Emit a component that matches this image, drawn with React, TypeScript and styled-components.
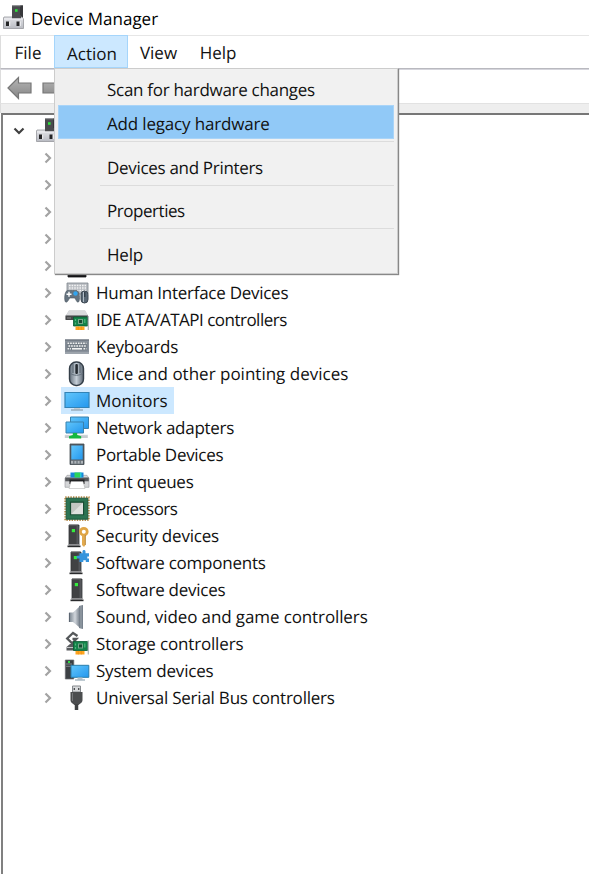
import React from "react";
import styled, { createGlobalStyle } from "styled-components";

const GlobalStyle = createGlobalStyle`
  * { box-sizing: border-box; }
  body { margin: 0; background: #fff; overflow: hidden; }
`;

const Window = styled.div`
  width: 589px;
  height: 874px;
  display: flex;
  flex-direction: column;
  background: #fff;
  color: #111;
  font: 17px/27px "Open Sans", "Noto Sans", sans-serif;
  text-rendering: geometricPrecision;
  white-space: nowrap;
`;

const TitleBar = styled.header`
  height: 35px;
  display: flex;
  align-items: center;
  padding: 1px 0 0 2px;
  gap: 3px;
  color: #000;
`;

const Text = styled.span<{ $track?: number }>`
  letter-spacing: ${(p) => p.$track ?? 0}px;
`;

const MenuBar = styled.nav`
  height: 34px;
  display: flex;
  border-top: 1px solid #e6e6e6;
  border-left: 1px solid #ddd;
  border-bottom: 1px solid #b9b9bf;
`;

const MenuButton = styled.div<{ $open?: boolean; $width: number }>`
  position: relative;
  width: ${(p) => p.$width}px;
  height: 33px;
  margin-top: -1px;
  display: flex;
  justify-content: center;
  align-items: center;
  padding: ${(p) => (p.$open ? "3px 0 0 2px" : "1px 0 0 1px")};
  border: 1px solid ${(p) => (p.$open ? "#a5d5fb" : "transparent")};
  background: ${(p) => (p.$open ? "#cce8ff" : "transparent")};
`;

const Dropdown = styled.div`
  position: absolute;
  z-index: 2;
  left: -1px;
  top: 32px;
  width: 344px;
  height: 206px;
  padding: 3px 3px 0;
  background: linear-gradient(90deg, #efefef 0 45px, #f1f1f1 45px);
  border: 1px solid #ccc;
  box-shadow: 1px 1px 1px #888;
`;

const DropdownItem = styled.div<{ $active?: boolean; $first?: boolean }>`
  height: ${(p) => (p.$first ? 33 : 34)}px;
  display: flex;
  align-items: center;
  padding: 2px 0 0 48px;
  border: 1px solid ${(p) => (p.$active ? "#a9d4f8" : "transparent")};
  background: ${(p) => (p.$active ? "#91c9f7" : "transparent")};
`;

const Separator = styled.div<{ $tight?: boolean }>`
  height: ${(p) => (p.$tight ? 9 : 10)}px;
  padding: 2px 0 0 42px;
  &::before {
    content: "";
    display: block;
    height: 1px;
    background: #dcdcdc;
  }
`;

const Toolbar = styled.div`
  height: 34px;
  display: flex;
  align-items: center;
  gap: 7px;
  padding: 3px 0 0 6px;
  border-top: 1px solid #d5d5dc;
  border-left: 1px solid #ddd;
`;

const Band = styled.div`
  height: 10px;
  background: #eee;
  border-top: 1px solid #e2e2e2;
  border-left: 1px solid #ddd;
`;

const Tree = styled.main`
  flex: 1;
  margin-left: 1px;
  border-top: 2px solid #777;
  border-left: 2px solid #808080;
  padding-top: 2px;
`;

const Row = styled.div`
  height: 27px;
  display: flex;
  align-items: center;
  padding-left: 38px;
`;

const RootRow = styled(Row)`
  padding-left: 9px;
`;

const Chevron = styled.svg`
  width: 14px;
  height: 14px;
  flex: none;
  fill: none;
  stroke-width: 2.2;
`;

const Entry = styled.div<{ $selected?: boolean }>`
  height: 27px;
  margin-left: 6px;
  padding: 0 6px 0 3px;
  display: flex;
  align-items: center;
  gap: 6px;
  background: ${(p) => (p.$selected ? "#cce8ff" : "transparent")};
`;

const Glyph = styled.svg`
  width: 26px;
  height: 26px;
  flex: none;
  display: block;
`;

const Gradients = () => (
  <defs>
    <linearGradient id="screen" x1="0" y1="0" x2="1" y2="1">
      <stop offset="0" stopColor="#62c6fb" /><stop offset="1" stopColor="#2397ee" />
    </linearGradient>
    <linearGradient id="metal" x1="0" y1="0" x2="0" y2="1">
      <stop offset="0" stopColor="#e3e4e8" /><stop offset="1" stopColor="#b9bbc2" />
    </linearGradient>
    <linearGradient id="steel" x1="0" y1="0" x2="1" y2="0">
      <stop offset="0" stopColor="#65717d" /><stop offset=".5" stopColor="#c5ced7" /><stop offset="1" stopColor="#5c6773" />
    </linearGradient>
    <linearGradient id="arrow" x1="0" y1="0" x2="0" y2="1">
      <stop offset="0" stopColor="#b6b6b6" /><stop offset="1" stopColor="#858585" />
    </linearGradient>
    <linearGradient id="cone" x1="0" y1="0" x2="1" y2="0">
      <stop offset="0" stopColor="#75818c" /><stop offset=".6" stopColor="#d1d6dc" /><stop offset="1" stopColor="#858e98" />
    </linearGradient>
  </defs>
);

const ComputerIcon = () => (
  <Glyph viewBox="0 0 26 26">
    <Gradients />
    <path d="M10 .5h11v15H10z" fill="#4a4b4e" />
    <path d="M18 .5h3v15h-3z" fill="#37383b" />
    <path d="M10 .8h9" stroke="#85868a" strokeWidth=".8" />
    <rect x="13" y="4.200" width="2.600" height="2.600" fill="#2fe03c" />
    <path d="M2 12h18l1.500 2v9.500H1.500V13z" fill="url(#metal)" stroke="#95979c" strokeWidth=".8" />
    <path d="M10 10h9v3.500h-9z" fill="#4a4b4e" />
    <path d="M2 14h19" stroke="#f0f0f3" />
    <path d="M4 16.500h3.200v4.500H4zM14.500 16.500h3.200v4.500h-3.200z" fill="#242426" />
    <path d="M7.200 16.500h1v4.500h-1zM17.700 16.500h1v4.500h-1z" fill="#f7f7f8" />
  </Glyph>
);

const Card = ({ y = 0 }: { y?: number }) => (
  <g transform={`translate(0 ${y})`}>
    <path d="M9.5 10h14v9h-14z" fill="#15824a" stroke="#075b31" strokeWidth=".8" />
    <path d="M14 12h5v5h-5z" fill="#76a88b" />
    <path d="M15 13h3v3h-3z" fill="#174c31" />
    <path d="M11.500 12v2M11.500 15.500v2M20.800 12v4" stroke="#4cb77b" strokeWidth="1.200" />
    <path d="M11.5 19.5h9V23h-9z" fill="#ffa51f" />
    <path d="M14.3 19.5V23M17.3 19.5V23" stroke="#e88c10" strokeWidth=".6" />
    <path d="M24.3 9v14" stroke="#aeb4b9" strokeWidth="1.2" />
  </g>
);

const Tower = ({ x = 0, y = 0 }: { x?: number; y?: number }) => (
  <g transform={`translate(${x} ${y})`}>
    <path d="M5 2h10v20H5z" fill="#414244" stroke="#343537" strokeWidth=".8" />
    <path d="M5 1.800h9" stroke="#8b8c8e" />
    <path d="M12.5 3h2v18h-2z" fill="#55565a" />
    <rect x="7.800" y="6" width="3.200" height="3.200" fill="#35ec3d" />
    <path d="M3.5 22.5h13v1.7h-13z" fill="#292a2c" />
    <path d="M4.5 21.7h11" stroke="#a2a2a4" />
  </g>
);

const icons: Record<string, React.ReactNode> = {
  hidden: <path d="M4 8h18v16H4z" fill="#151517" stroke="#151517" strokeWidth=".8" />,
  hid: (
    <>
      <path d="M3 3h21v11H3z" fill="#b7bbc0" stroke="#7e858d" strokeWidth=".8" />
      <path d="M5 5.5h17M5 8h17M5 10.5h17" stroke="#f4f4f4" strokeWidth="1.4" strokeDasharray="1.6 1" />
      <path d="M1.500 22c-1.500-2-1-11 2-11.500h9c3 0 4 9.500 2 11.500-2 1-3-4-4-4H6c-1 0-2 5-4.500 4z" fill="#65737f" stroke="#4a5660" strokeWidth=".6" />
      <path d="M5 11.800v5M2.500 14.300h5" stroke="#fff" strokeWidth="1.4" />
      <circle cx="11.5" cy="13.5" r="2.2" fill="#31a4ef" />
      <rect x="17" y="11" width="7" height="12" rx="3.5" fill="#596774" stroke="#3d4852" />
      <path d="M19.5 12v10" stroke="#b2bec8" /><path d="M20.8 12v5" stroke="#27313a" />
    </>
  ),
  ide: (
    <>
      <path d="M5 3.5h16l3 5v3.5H1.5V9z" fill="#bfc1c4" />
      <path d="M5 3.5h16l3 5H2z" fill="#dadbdd" />
      <path d="M1.5 8.5H24V13H1.5z" fill="#47484a" />
      <path d="M3 11h4" stroke="#8c8c8c" />
      <Card />
    </>
  ),
  keyboard: (
    <>
      <path d="M1 5.500h24v14.500H1z" fill="#88909a" />
      <path d="M1 6h24" stroke="#626b75" />
      <path d="M2.5 8h21v8.5h-21z" fill="#767f88" />
      <path d="M3.5 9.3h19M4.5 12h17.5M3.5 14.8h3.5M19.5 14.8h3" stroke="#f2f2f2" strokeWidth="1.6" strokeDasharray="1.7 .9" />
      <path d="M8 14.8h10" stroke="#f2f2f2" strokeWidth="1.6" />
      <path d="M1 19h24" stroke="#b3b9bf" />
    </>
  ),
  mouse: (
    <>
      <rect x="5.5" y="1" width="14" height="23.5" rx="6.5" fill="url(#steel)" stroke="#343e48" strokeWidth="1.4" />
      <path d="M9 3v9M16 3v9" stroke="#45515c" strokeWidth=".8" />
      <path d="M6 12c3 3 10 3 13 0" stroke="#65717d" fill="none" />
      <rect x="11.3" y="3" width="2.6" height="10" rx="1" fill="#252b31" />
    </>
  ),
  monitor: (
    <>
      <path d="M1 4.500h24v15H1z" fill="url(#screen)" stroke="#3283b6" strokeWidth="1.200" />
      <path d="M10 20h6v1.500h-6z" fill="#c5ccd1" /><path d="M7 22h12" stroke="#80909b" strokeWidth="1" />
    </>
  ),
  network: (
    <>
      <path d="M6.500 2h18v11.500h-18z" fill="url(#screen)" stroke="#3981ad" />
      <path d="M2 7h17.500v11H2z" fill="url(#screen)" stroke="#3981ad" />
      <path d="M.8 20h23v3H.8z" fill="#c7cccf" />
      <path d="M1 19.8h23" stroke="#edf0f1" strokeWidth=".7" />
      <path d="M8.8 18h4.4v2l4 1.300v2.100H5v-2.100l3.800-1.300z" fill="#16b841" />
    </>
  ),
  portable: (
    <>
      <path d="M6 2h14v20.5H6z" fill="#545c64" stroke="#434b52" strokeWidth=".8" />
      <path d="M7.3 3.5h11.4v14H7.3z" fill="url(#screen)" />
      <path d="M7 18.7h12v3H7z" fill="#aeb4b9" /><path d="M9.8 18.7v3M13 18.7v3M16.2 18.7v3" stroke="#59636b" />
    </>
  ),
  printer: (
    <>
      <path d="M3 6.300h20l2 3v9H1v-9z" fill="#d4d5d7" stroke="#94969a" strokeWidth=".6" />
      <path d="M1.200 8.500h23.600v3.800H1.200z" fill="#55575a" />
      <path d="M6.500 3.500h13v5h-13z" fill="#1686db" /><path d="M10.500 3.500h5.500v5h-5.500z" fill="#2ad45a" />
      <path d="M16 3.500h1.500v5H16z" fill="#27c9d0" />
      <path d="M5.500 10.500h15v4.500h-15z" fill="#202123" />
      <path d="M7 12.500h12l2 7H5z" fill="#fff" stroke="#aaa" strokeWidth=".5" />
    </>
  ),
  cpu: (
    <>
      <path d="M1.2 1.2h23.6v23H1.2z" fill="none" stroke="#b78c4b" strokeWidth="1.8" strokeDasharray="1.4 1.2" />
      <path d="M2.2 2.2h21.6v21H2.2z" fill="#2c7352" stroke="#1b563b" />
      <path d="M6.5 6.2h13v12.500h-13z" fill="#c3c7c3" stroke="#184c33" strokeWidth="1.2" />
      <path d="M7 18.200L19 6.700v11.500z" fill="#dfe1df" />
    </>
  ),
  security: (
    <>
      <Tower />
      <circle cx="19.8" cy="8.7" r="3.4" fill="#fff" stroke="#e0a544" strokeWidth="2.8" />
      <path d="M18 12h3.700v9.500L20 24l-2-2z" fill="#e3ab50" />
      <path d="M21.300 12v10" stroke="#a87833" strokeWidth=".7" />
    </>
  ),
  component: (
    <>
      <Tower x={2} />
      <path d="M15.500 3.200h3V1.500c0-2 3-2 3 0v1.700H25v3.300h-1.700v2H25V12h-3.200v-1.700h-2.500V12h-3.800V8.500h-1.700c-1.800 0-1.800-2.700 0-2.700h1.700z" fill="#3594dc" />
    </>
  ),
  software: <Tower x={3} />,
  sound: (
    <>
      <path d="M5 8.5h4L15 3v20l-6-5H5z" fill="url(#cone)" />
      <path d="M15 2l4-1v24l-4-1z" fill="#77818c" /><path d="M17 2v22" stroke="#9da5ad" />
      <path d="M5.4 9v9" stroke="#59636e" />
    </>
  ),
  storage: (
    <>
      <path d="M6 13h6v6.500H2.500V16z" fill="#585b5e" />
      <path d="M2.500 16.500h7" stroke="#c5c6c8" />
      <path d="M13.500 5L9 2 3.200 7.500l5 4.800 4.200-4.500H8.500" fill="none" stroke="#55585a" strokeWidth="2.300" />
      <Card y={.5} />
    </>
  ),
  system: (
    <>
      <path d="M1.3 2h8.5v19H1.3z" fill="#3c4044" stroke="#6b6f72" strokeWidth=".7" />
      <path d="M2 6h6M2 8.3h6" stroke="#80868a" /><rect x="4" y="3" width="2" height="2" fill="#2fdd42" />
      <path d="M7 7.3h17.8v12H7z" fill="url(#screen)" stroke="#297dab" />
      <path d="M13.5 19.5h5v2h-5z" fill="#b9c6ce" /><path d="M11 22h10" stroke="#8097a5" />
    </>
  ),
  usb: (
    <>
      <path d="M8.5 1h8v6h-8z" fill="#d6d8da" stroke="#85898d" /><path d="M10.3 3v2M14.7 3v2" stroke="#474a4c" strokeWidth="1.3" />
      <path d="M6.500 7h12v8c0 3-2.500 3.500-4 5h-4c-1.500-1.500-4-2-4-5z" fill="#4b4d4f" />
      <path d="M8.5 8v8" stroke="#77797b" /><path d="M12.500 19v6" stroke="#3f4143" strokeWidth="3.5" />
    </>
  ),
};

interface Device { icon: string; name?: string; track?: number; selected?: boolean }

const devices: Device[] = [
  { icon: "hidden" }, { icon: "hidden" }, { icon: "hidden" }, { icon: "hidden" }, { icon: "hidden" },
  { icon: "hid", name: "Human Interface Devices", track: -0.27 },
  { icon: "ide", name: "IDE ATA/ATAPI controllers", track: -0.51 },
  { icon: "keyboard", name: "Keyboards", track: -0.2 },
  { icon: "mouse", name: "Mice and other pointing devices" },
  { icon: "monitor", name: "Monitors", selected: true },
  { icon: "network", name: "Network adapters", track: -0.27 },
  { icon: "portable", name: "Portable Devices", track: -0.3 },
  { icon: "printer", name: "Print queues", track: -0.28 },
  { icon: "cpu", name: "Processors", track: -0.52 },
  { icon: "security", name: "Security devices", track: -0.2 },
  { icon: "component", name: "Software components", track: -0.24 },
  { icon: "software", name: "Software devices", track: -0.25 },
  { icon: "sound", name: "Sound, video and game controllers", track: -0.11 },
  { icon: "storage", name: "Storage controllers", track: -0.16 },
  { icon: "system", name: "System devices", track: -0.2 },
  { icon: "usb", name: "Universal Serial Bus controllers", track: -0.22 },
];

export default function App() {
  return (
    <Window>
      <GlobalStyle />
      <TitleBar>
        <ComputerIcon />
        <Text>Device Manager</Text>
      </TitleBar>
      <MenuBar>
        <MenuButton $width={53}><Text>File</Text></MenuButton>
        <MenuButton $width={74} $open>
          <Text>Action</Text>
          <Dropdown>
            <DropdownItem $first><Text $track={-0.29}>Scan for hardware changes</Text></DropdownItem>
            <DropdownItem $active><Text $track={-0.17}>Add legacy hardware</Text></DropdownItem>
            <Separator />
            <DropdownItem><Text $track={-0.31}>Devices and Printers</Text></DropdownItem>
            <Separator $tight />
            <DropdownItem><Text $track={-0.46}>Properties</Text></DropdownItem>
            <Separator />
            <DropdownItem><Text $track={-0.2}>Help</Text></DropdownItem>
          </Dropdown>
        </MenuButton>
        <MenuButton $width={60}><Text>View</Text></MenuButton>
        <MenuButton $width={59}><Text $track={-0.1}>Help</Text></MenuButton>
      </MenuBar>
      <Toolbar>
        <Glyph viewBox="0 0 26 26">
          <path d="M1 13L11.500 2.500V8H24v10H11.500v5.500z" fill="url(#arrow)" stroke="#777" strokeWidth="1.2" />
        </Glyph>
        <Glyph viewBox="0 0 26 26">
          <path d="M3 8h12V2.500L25 13 15 23.500V18H3z" fill="url(#arrow)" stroke="#777" strokeWidth="1.2" />
        </Glyph>
      </Toolbar>
      <Band />
      <Tree>
        <RootRow>
          <Chevron viewBox="0 0 14 14" stroke="#404040"><path d="M2.500 4.500L7 9l4.500-4.500" /></Chevron>
          <Entry><ComputerIcon /></Entry>
        </RootRow>
        {devices.map((d, i) => (
          <Row key={i}>
            <Chevron viewBox="0 0 14 14" stroke="#a3a3a3"><path d="M4.500 2.500L9 7l-4.500 4.500" /></Chevron>
            <Entry $selected={d.selected}>
              <Glyph viewBox="0 0 26 26">{icons[d.icon]}</Glyph>
              {d.name && <Text $track={d.track}>{d.name}</Text>}
            </Entry>
          </Row>
        ))}
      </Tree>
    </Window>
  );
}
